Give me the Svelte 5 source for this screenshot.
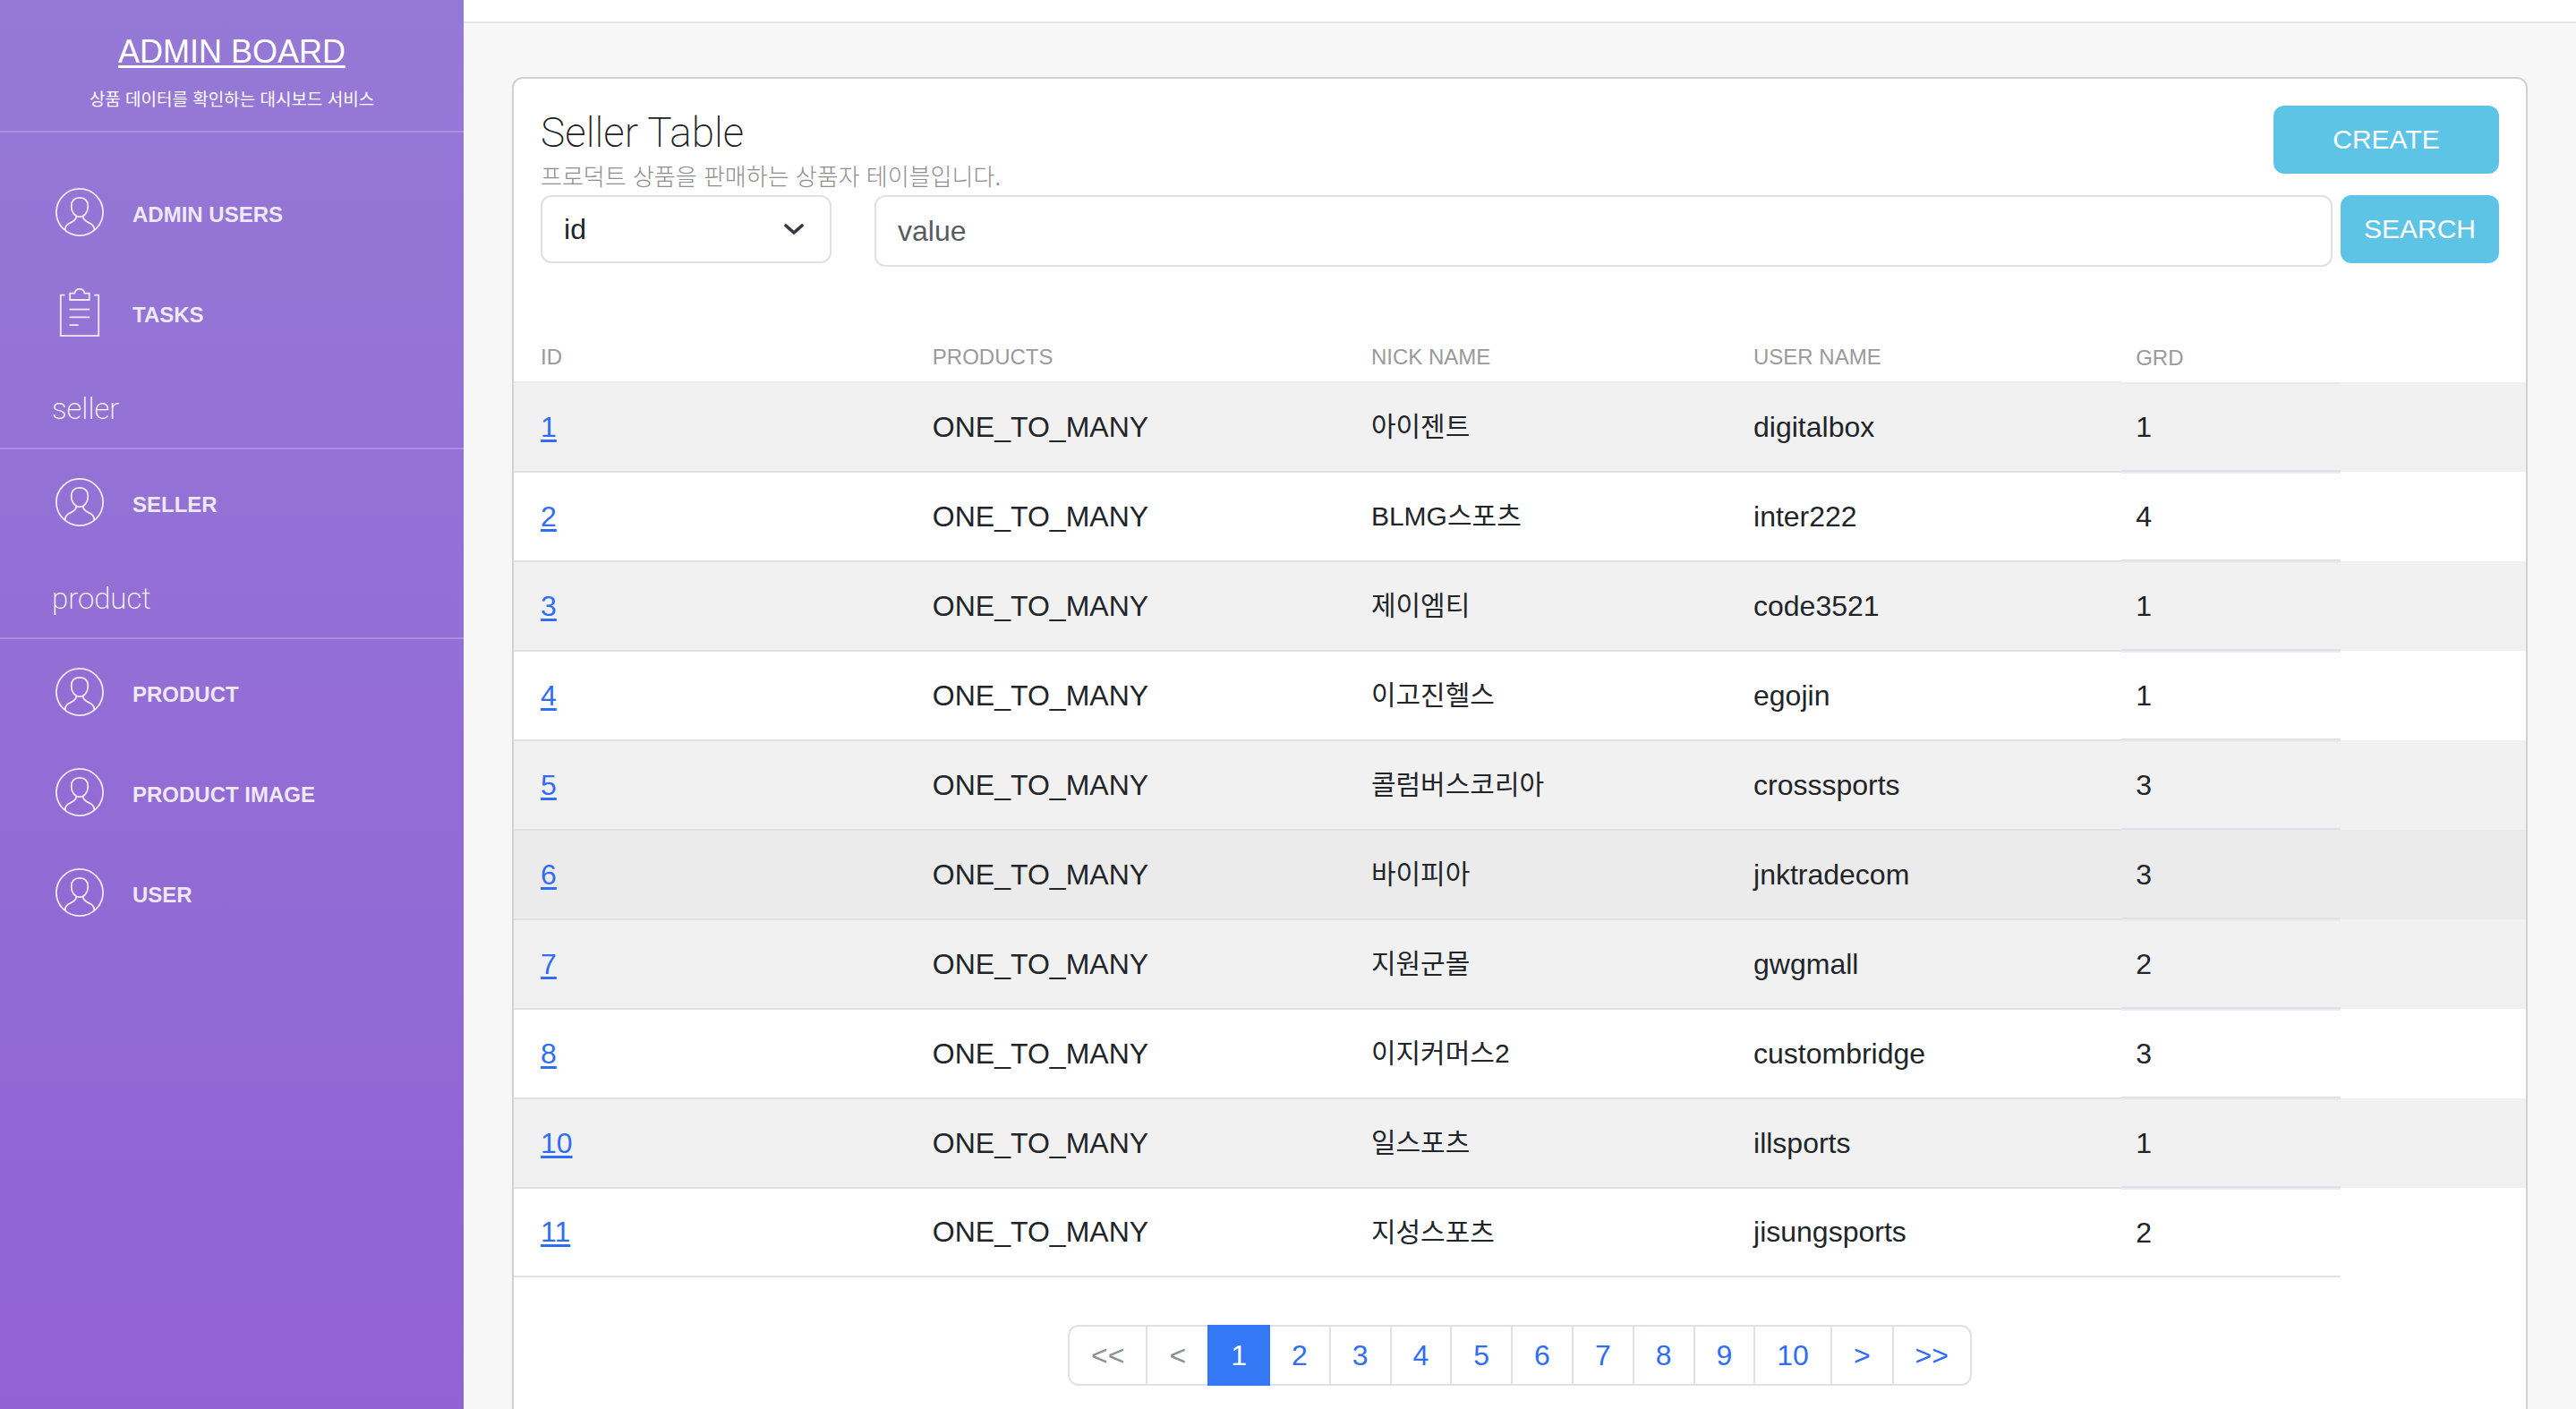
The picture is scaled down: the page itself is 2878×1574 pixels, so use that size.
<script>
  const primaryNav = [
    { label: 'ADMIN USERS', icon: 'user' },
    { label: 'TASKS', icon: 'note' },
  ];
  const sections = [
    { title: 'seller', items: ['SELLER'] },
    { title: 'product', items: ['PRODUCT', 'PRODUCT IMAGE', 'USER'] },
  ];
  const rows = [
    { id: 1, nick: '아이젠트', user: 'digitalbox', grd: 1 },
    { id: 2, nick: 'BLMG스포츠', user: 'inter222', grd: 4 },
    { id: 3, nick: '제이엠티', user: 'code3521', grd: 1 },
    { id: 4, nick: '이고진헬스', user: 'egojin', grd: 1 },
    { id: 5, nick: '콜럼버스코리아', user: 'crosssports', grd: 3 },
    { id: 6, nick: '바이피아', user: 'jnktradecom', grd: 3 },
    { id: 7, nick: '지원군몰', user: 'gwgmall', grd: 2 },
    { id: 8, nick: '이지커머스2', user: 'custombridge', grd: 3 },
    { id: 10, nick: '일스포츠', user: 'illsports', grd: 1 },
    { id: 11, nick: '지성스포츠', user: 'jisungsports', grd: 2 },
  ];
  const pages = ['<<', '<', '1', '2', '3', '4', '5', '6', '7', '8', '9', '10', '>', '>>'];
  let field = $state('id');
  let query = $state('');
  let current = $state('1');
  let highlighted = $state(6);
</script>

{#snippet userIcon()}
  <svg class="icon" viewBox="0 0 54 54" aria-hidden="true">
    <circle cx="27" cy="27" r="26.1" />
    <path d="M27 10.800c-6 0-9.300 3.700-9.300 9.700 0 6.500 3.900 11.700 9.300 11.700s9.300-5.200 9.300-11.700c0-6-3.300-9.700-9.300-9.700z" />
    <path d="M23.200 31.800c0 3.400-1.900 4.800-5.600 6.600-4.200 2-7 3.600-7 8.600" />
    <path d="M30.800 31.800c0 3.400 1.900 4.800 5.600 6.600 4.200 2 7 3.600 7 8.600" />
  </svg>
{/snippet}

{#snippet noteIcon()}
  <svg class="icon" viewBox="0 0 54 54" aria-hidden="true">
    <path d="M10.400 7.600H5.800v45.500h42.400V7.600h-4.900" />
    <path d="M16.200 5.700h5.200c.4-3 2.500-4.800 5.500-4.800s5.100 1.800 5.500 4.800h5.300v7.300H16.200z" />
    <path d="M15.500 23.700h22.700M15.500 32.400h22.700M15.500 41.100h10.300" />
  </svg>
{/snippet}

<div class="layout">
  <aside class="sidebar">
    <header class="brand">
      <a href="#home">ADMIN BOARD</a>
      <p>상품 데이터를 확인하는 대시보드 서비스</p>
    </header>
    <nav>
      {#each primaryNav as item}
        <a class="nav-item" href="#{item.label}">
          {#if item.icon === 'user'}{@render userIcon()}{:else}{@render noteIcon()}{/if}
          <span>{item.label}</span>
        </a>
      {/each}
      {#each sections as section}
        <h2>{section.title}</h2>
        {#each section.items as label}
          <a class="nav-item" href="#{label}">{@render userIcon()}<span>{label}</span></a>
        {/each}
      {/each}
    </nav>
  </aside>

  <div class="page">
    <div class="topbar"></div>
    <main>
      <section class="card">
        <div class="card-head">
          <div class="title-row">
            <div>
              <h1>Seller Table</h1>
              <p class="subtitle">프로덕트 상품을 판매하는 상품자 테이블입니다.</p>
            </div>
            <button class="btn create" type="button">CREATE</button>
          </div>
          <form class="search" onsubmit={(e) => e.preventDefault()}>
            <div class="select-wrap">
              <select bind:value={field} aria-label="Search field">
                <option value="id">id</option>
                <option value="nick">nick name</option>
                <option value="user">user name</option>
              </select>
              <svg class="chevron" viewBox="0 0 22 12" aria-hidden="true"><path d="M2 2l9 8 9-8" /></svg>
            </div>
            <input type="text" placeholder="value" aria-label="Search value" bind:value={query} />
            <button class="btn" type="submit">SEARCH</button>
          </form>
        </div>

        <table>
          <thead>
            <tr>
              <th class="c-id">ID</th>
              <th class="c-products">PRODUCTS</th>
              <th class="c-name">NICK NAME</th>
              <th class="c-name">USER NAME</th>
              <th class="c-grd">GRD</th>
              <td class="c-rest"></td>
            </tr>
          </thead>
          <tbody>
            {#each rows as row}
              <tr class:highlighted={row.id === highlighted}>
                <td class="c-id"><a href="#seller-{row.id}">{row.id}</a></td>
                <td>ONE_TO_MANY</td>
                <td class="nick">{row.nick}</td>
                <td>{row.user}</td>
                <td class="c-grd">{row.grd}</td>
                <td class="c-rest"></td>
              </tr>
            {/each}
          </tbody>
        </table>

        <nav class="pagination" aria-label="Pages">
          {#each pages as page, i}
            <button
              type="button"
              class:active={page === current}
              disabled={i < 2}
              onclick={() => (current = page)}>{page}</button>
          {/each}
        </nav>
      </section>
    </main>
  </div>
</div>

<style>
  :global(body) {
    margin: 0;
    font-family: 'Liberation Sans', 'Noto Sans CJK KR', sans-serif;
    font-size: 32px;
    color: #212529;
  }
  .layout {
    display: flex;
    height: 100vh;
    overflow: hidden;
    background: #f7f7f7;
  }
  .sidebar {
    flex: 0 0 18%;
    box-sizing: border-box;
    color: #fff;
    background: linear-gradient(#9579d6, #9162d4);
  }
  .brand {
    display: flex;
    flex-direction: column;
    align-items: center;
    gap: 16px;
    box-sizing: border-box;
    height: 148px;
    padding-top: 38px;
    border-bottom: 2px solid rgba(255, 255, 255, 0.2);
  }
  .brand a {
    color: #fff;
    font-size: 36px;
    line-height: 40px;
    text-decoration-thickness: 3px;
    text-underline-offset: 3px;
  }
  .brand p {
    margin: 0;
    font-size: 19px;
    line-height: 36px;
  }
  .sidebar nav {
    padding-top: 33px;
  }
  .nav-item {
    display: flex;
    align-items: center;
    gap: 32px;
    height: 112px;
    padding-left: 62px;
    color: rgba(255, 255, 255, 0.86);
    font-size: 24px;
    font-weight: 700;
    text-decoration: none;
  }
  .nav-item span {
    padding-top: 5px;
  }
  .icon {
    flex: none;
    width: 54px;
    height: 54px;
    fill: none;
    stroke: currentColor;
    stroke-width: 1.8;
  }
  h2 {
    box-sizing: border-box;
    height: 97px;
    margin: 0 0 3px;
    padding: 32px 0 0 58px;
    border-bottom: 2px solid rgba(255, 255, 255, 0.2);
    font-family: Roboto, sans-serif;
    font-size: 33px;
    font-weight: 200;
    line-height: 40px;
  }
  .page {
    flex: 1;
    min-width: 0;
  }
  .topbar {
    height: 24px;
    background: #fff;
    border-bottom: 2px solid #e5e5e5;
  }
  main {
    padding: 60px 54px;
  }
  .card {
    min-height: 1600px;
    background: #fff;
    border: 2px solid #d1d1d1;
    border-radius: 12px;
  }
  .card-head {
    padding: 30px 30px 0;
  }
  .title-row {
    display: flex;
    justify-content: space-between;
    height: 100px;
  }
  h1 {
    margin: 0;
    color: #222;
    font-family: Roboto, sans-serif;
    font-size: 46px;
    font-weight: 200;
    line-height: 60px;
  }
  .subtitle {
    margin: 0;
    color: #8e8e8e;
    font-size: 26px;
    font-weight: 300;
    line-height: 40px;
  }
  .btn {
    height: 76px;
    padding: 0 26px;
    color: #fff;
    background: #5ec4e6;
    border: 0;
    border-radius: 12px;
    font: inherit;
    font-size: 30px;
  }
  .create {
    width: 252px;
  }
  .search {
    display: flex;
    align-items: flex-start;
  }
  .select-wrap {
    display: grid;
    flex: 0 0 325px;
    margin-right: 48px;
  }
  select,
  input {
    box-sizing: border-box;
    height: 76px;
    padding: 0 24px;
    color: #212529;
    background: #fff;
    border: 2px solid #dee2e6;
    border-radius: 12px;
    font: inherit;
  }
  select {
    grid-area: 1 / 1;
    appearance: none;
  }
  .chevron {
    grid-area: 1 / 1;
    place-self: center end;
    width: 22px;
    height: 12px;
    margin-right: 31px;
    fill: none;
    stroke: #343a40;
    stroke-width: 3.6;
    stroke-linecap: round;
    stroke-linejoin: round;
    pointer-events: none;
  }
  input {
    flex: 1;
    min-width: 0;
    height: 80px;
    margin-right: 9px;
  }
  input::placeholder {
    color: #595c5f;
    opacity: 1;
  }
  table {
    width: 100%;
    margin-top: 70px;
    border-spacing: 0;
    table-layout: fixed;
  }
  th,
  td {
    box-sizing: border-box;
    padding: 0 16px;
    text-align: left;
  }
  th {
    height: 59px;
    padding-top: 4px;
    color: #9a9a9a;
    border-bottom: 1px solid #e9ecef;
    font-size: 24px;
    font-weight: 400;
  }
  th.c-grd {
    border-bottom: 0;
  }
  .c-id {
    width: 20.1%;
    padding-left: 30px;
  }
  .c-products {
    width: 21.8%;
  }
  .c-name {
    width: 19%;
  }
  .c-grd {
    width: 10.9%;
  }
  .c-rest {
    width: 9.2%;
  }
  tbody td {
    height: 100px;
    border-top: 1px solid #dee2e6;
    border-bottom: 1px solid #dee2e6;
  }
  tbody tr:first-child td {
    border-top-color: #e9ecef;
  }
  tbody td.c-grd {
    border-top: 2px solid #e9ecef;
    border-bottom: 2px solid #dee2e6;
  }
  tbody td.c-rest {
    border: 0;
  }
  tbody tr:nth-child(odd) {
    background: #f1f1f1;
  }
  tbody tr.highlighted {
    background: #ebebeb;
  }
  tbody tr:last-child td:not(.c-rest) {
    border-bottom-width: 2px;
  }
  td a {
    color: #2f6df6;
    text-decoration-thickness: 3px;
    text-underline-offset: 3px;
  }
  .nick {
    padding-bottom: 6px;
    font-size: 30px;
  }
  .pagination {
    display: flex;
    justify-content: center;
    margin-top: 53px;
  }
  .pagination button {
    box-sizing: border-box;
    padding: 8px 24px;
    margin-left: -2px;
    color: #2f6df6;
    background: #fff;
    border: 2px solid #dee2e6;
    font: inherit;
    line-height: 48px;
  }
  .pagination button:first-child {
    margin-left: 0;
    border-radius: 12px 0 0 12px;
  }
  .pagination button:last-child {
    border-radius: 0 12px 12px 0;
  }
  .pagination button:disabled {
    color: #8b8f96;
  }
  .pagination button.active {
    z-index: 1;
    color: #fff;
    background: #3478f6;
    border-color: #3478f6;
  }
</style>
